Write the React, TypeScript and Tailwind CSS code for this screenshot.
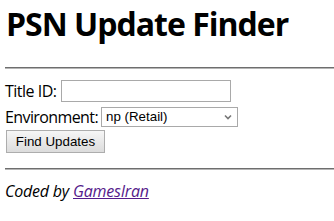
import React from "react";

export default function App() {
  return (
    <div className="w-[334px] h-[221px] bg-white overflow-hidden pl-[5px] text-black font-['Open_Sans','Noto_Sans',sans-serif]">
      <h1 className="pt-[4px] pl-[1px] text-[32px] leading-[40px] font-bold tracking-[-1px]">PSN Update Finder</h1>
      <div className="mt-[23px] h-[2px] border-t border-t-[#6e6e6e] border-b border-b-[#b5b5b5]" />
      <form className="mt-[11px] flex flex-col" onSubmit={(e) => e.preventDefault()}>
        <div className="flex items-center h-[22px]">
          <label className="text-[16px] leading-[22px] mr-[4px] tracking-[-0.5px]">Title ID:</label>
          <input type="text" className="w-[170px] h-[22px] border border-[#a9a9a9] bg-white outline-none" />
        </div>
        <div className="flex items-center h-[20px] mt-[5px]">
          <label className="text-[16px] leading-[20px] mr-[3px] tracking-[-0.6px]">Environment:</label>
          <div className="relative w-[137px] h-[20px] border border-[#a9a9a9] bg-white flex items-center">
            <span className="pl-[4px] text-[13.33px] font-['Liberation_Sans',Arial,sans-serif] leading-[18px]">np (Retail)</span>
            <svg className="absolute right-[5px] top-[6px]" width="8" height="6" viewBox="0 0 8 6">
              <path d="M1 1.5 L4 4.5 L7 1.5" stroke="#777" strokeWidth="1.6" fill="none" />
            </svg>
          </div>
        </div>
        <div className="mt-[1px]">
          <button type="submit" className="ml-[1px] w-[99px] h-[23px] border border-[#adadad] bg-gradient-to-b from-[#f6f6f6] to-[#dcdcdc] text-[13.33px] font-['Liberation_Sans',Arial,sans-serif] leading-[21px] text-black">Find Updates</button>
        </div>
      </form>
      <div className="mt-[15px] h-[2px] border-t border-t-[#6e6e6e] border-b border-b-[#b5b5b5]" />
      <p className="mt-[10px] text-[16px] leading-[22px] italic tracking-[-0.2px]">
        Coded by <a href="#" className="underline text-[#551a8b]">GamesIran</a>
      </p>
    </div>
  );
}
